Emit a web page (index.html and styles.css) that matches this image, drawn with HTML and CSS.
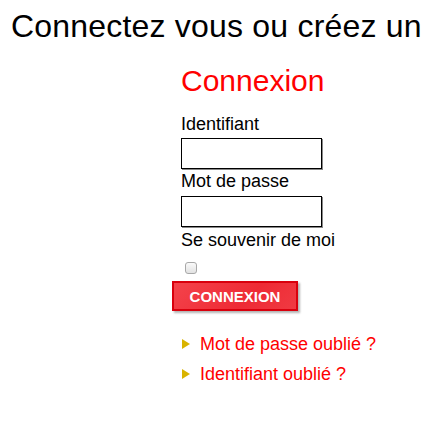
FILE: index.html
```html
<!DOCTYPE html>
<html lang="fr">
<head>
  <meta charset="UTF-8" />
  <meta name="viewport" content="width=device-width, initial-scale=1.0"/>
  <title>Connexion</title>
  <link rel="stylesheet" href="styles.css">
</head>
<body>
  <h1 class="page-title">Connectez vous ou créez un</h1>

  <div class="login">
    <h2 class="login-title">Connexion</h2>
    <form class="login-form">
      <label for="username">Identifiant</label>
      <input type="text" id="username" class="field first">
      <label for="password" class="lbl-pass">Mot de passe</label>
      <input type="password" id="password" class="field second">
      <label for="remember" class="lbl-remember">Se souvenir de moi</label>
      <input type="checkbox" id="remember" class="remember">
      <button type="button" class="btn-login">CONNEXION</button>
    </form>

    <ul class="links">
      <li><a href="#">Mot de passe oublié ?</a></li>
      <li><a href="#">Identifiant oublié ?</a></li>
    </ul>
  </div>
</body>
</html>
```

FILE: styles.css
```css
html, body {
  margin: 0;
  overflow: hidden;
  background: #fff;
}
body {
  font-family: "Liberation Sans", Arial, sans-serif;
  color: #000;
}

.page-title {
  font-size: 32px;
  font-weight: normal;
  letter-spacing: 0.2px;
  line-height: 36px;
  margin: 0;
  padding: 8px 0 0 11px;
  white-space: nowrap;
}

.login {
  padding-left: 181px;
}
.login-title {
  font-size: 30px;
  font-weight: normal;
  line-height: 36px;
  color: #f00;
  margin: 19px 0 0;
}

.login-form {
  display: flex;
  flex-direction: column;
  align-items: flex-start;
  margin-top: 14px;
}
.login-form label {
  font-size: 18px;
  line-height: 22px;
}
.field {
  box-sizing: border-box;
  width: 141px;
  height: 31px;
  margin: 3px 0 0;
  padding: 2px 4px;
  border: 1px solid #000;
  box-shadow: 1px 1px 0 #888;
  background: #fff;
}
.lbl-pass {
  margin-top: 1px;
}
.field.second {
  margin-top: 4px;
}
.lbl-remember {
  margin-top: 2px;
}
.remember {
  appearance: none;
  -webkit-appearance: none;
  box-sizing: border-box;
  width: 12px;
  height: 12px;
  margin: 11px 0 0 4px;
  border: 1px solid #a8a8a8;
  border-radius: 3px;
  background: linear-gradient(#fafafa, #e2e2e2);
}
.btn-login {
  box-sizing: border-box;
  width: 126px;
  height: 30px;
  margin: 7px 0 0 -9px;
  padding: 0;
  background: linear-gradient(135deg, #f4434b, #ee2b35 60%, #f03a42);
  border: 2px solid #d9000d;
  box-shadow: 2px 2px 2px rgba(0,0,0,0.3);
  color: #fff;
  font-family: "Liberation Sans", Arial, sans-serif;
  font-size: 15px;
  font-weight: bold;
  cursor: pointer;
}

.links {
  list-style: none;
  margin: 18px 0 0;
  padding: 0;
}
.links li {
  display: flex;
  align-items: center;
  line-height: 30px;
  font-size: 18px;
}
.links li::before {
  content: "";
  width: 0;
  height: 0;
  border-top: 5px solid transparent;
  border-bottom: 5px solid transparent;
  border-left: 8px solid #d9b400;
  margin: 0 10px 0 1px;
}
.links a {
  color: #f00;
  text-decoration: none;
}
```
